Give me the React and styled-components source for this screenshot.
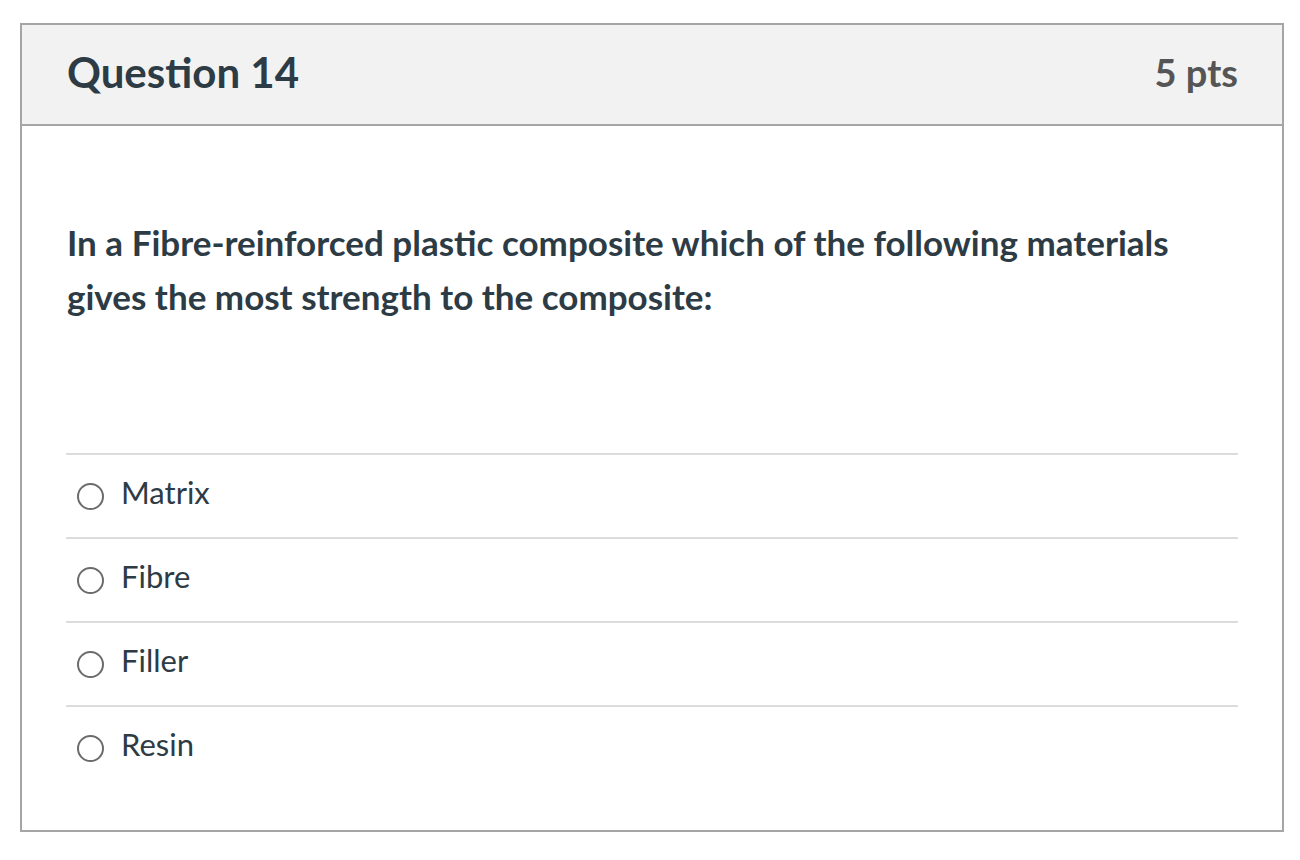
import React from "react";
import styled, { createGlobalStyle } from "styled-components";

const Global = createGlobalStyle`
  html, body { margin: 0; padding: 0; background: #fff; }
  body { font-family: Lato, "Open Sans", sans-serif; color: #2d3b45; }
`;

const Page = styled.div`
  padding: 23px 16px 0 20px;
`;

const Card = styled.div`
  width: 1264px;
  height: 809px;
  box-sizing: border-box;
  border: 2px solid #a5a5a5;
  display: flex;
  flex-direction: column;
`;

const Header = styled.div`
  height: 101px;
  box-sizing: border-box;
  background: #f2f2f2;
  border-bottom: 2px solid #a5a5a5;
  display: flex;
  align-items: center;
  justify-content: space-between;
  padding: 0 44px 6px 45px;
`;

const Title = styled.div`
  font-size: 42px;
  font-weight: 700;
  color: #2d3b45;
`;

const Points = styled.div`
  font-size: 38px;
  font-weight: 700;
  color: #555555;
`;

const Body = styled.div`
  padding: 89px 44px 0 44px;
`;

const QuestionText = styled.div`
  font-size: 35px;
  font-weight: 700;
  line-height: 54px;
  padding-left: 1px;
  margin-bottom: 130px;
`;

const Option = styled.label`
  display: flex;
  align-items: center;
  height: 82px;
  border-top: 2px solid #dcdcdc;
  font-size: 31px;
  color: #2d3b45;
`;

const OptionText = styled.span`
  margin-bottom: 9px;
`;

const Radio = styled.span`
  width: 23px;
  height: 23px;
  border: 2px solid #6b6b6b;
  border-radius: 50%;
  margin: 0 17px 0 11px;
  flex-shrink: 0;
`;

const options = ["Matrix", "Fibre", "Filler", "Resin"];

export default function App() {
  return (
    <Page>
      <Global />
      <Card>
        <Header>
          <Title>Question 14</Title>
          <Points>5 pts</Points>
        </Header>
        <Body>
          <QuestionText>
            In a Fibre-reinforced plastic composite which of the following materials
            <br />
            gives the most strength to the composite:
          </QuestionText>
          {options.map((o) => (
            <Option key={o}>
              <Radio />
              <OptionText>{o}</OptionText>
            </Option>
          ))}
        </Body>
      </Card>
    </Page>
  );
}
